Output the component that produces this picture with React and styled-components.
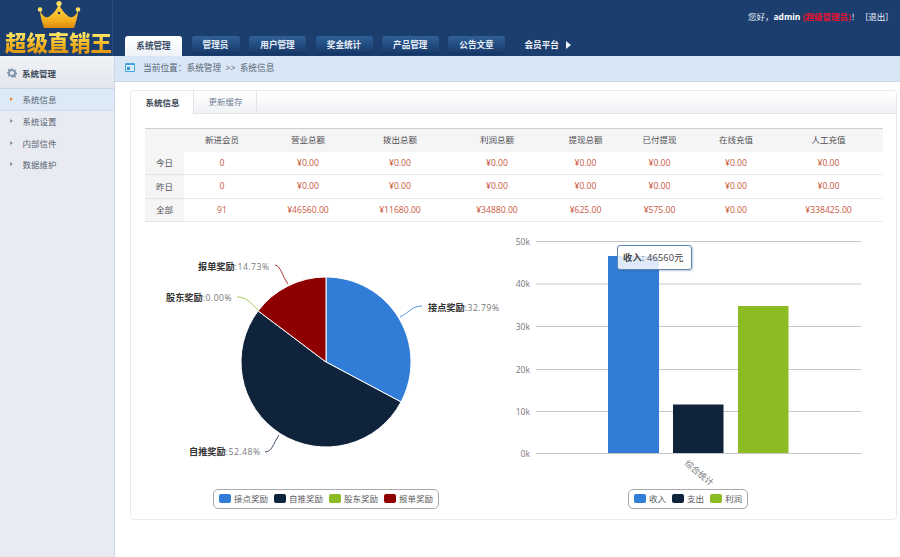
import React from "react";
import styled, { createGlobalStyle } from "styled-components";

const FONT = '"Open Sans", "Noto Sans CJK SC", sans-serif';

const Global = createGlobalStyle`
  html, body { margin: 0; padding: 0; background: #fff; }
  body { font-family: ${FONT}; font-size: 8.5px; color: #555; }
  * { box-sizing: border-box; }
`;

const Page = styled.div`
  width: 900px; height: 557px; display: flex; flex-direction: column; overflow: hidden;
`;
const Header = styled.header`
  height: 56px; background: #1c3e6f; display: flex; flex: none;
`;
const Logo = styled.div`
  width: 113px; flex: none; display: flex; flex-direction: column; align-items: center; padding-left: 5px;
  border-right: 1px solid #2a4a78;
`;
const LogoText = styled.div`
  font-family: "Noto Sans CJK SC", sans-serif; font-weight: 900; font-size: 21.4px; line-height: 24px;
  white-space: nowrap; margin-top: 0;
  background: linear-gradient(#ffe766 15%, #f4b41f 60%, #e39a12 90%);
  -webkit-background-clip: text; background-clip: text; color: transparent;
`;
const HeaderMain = styled.div`
  flex: 1; display: flex; flex-direction: column; justify-content: space-between;
`;
const UserBar = styled.div`
  display: flex; justify-content: flex-end; gap: 6px; padding: 11px 12px 0 0; color: #e6ecf5; line-height: 12px;
`;
const UserName = styled.b` color: #fff; font-size: 8.5px; `;
const Role = styled.span` color: #e8112d; font-weight: 700; `;
const Nav = styled.nav`
  display: flex; align-items: flex-end; padding-left: 12px; gap: 9.5px;
`;
const Tab = styled.div`
  width: ${p => p.$w}px; height: ${p => (p.$active ? 20 : 19)}px; margin-bottom: ${p => (p.$active ? 0 : 1)}px;
  padding-bottom: 2px;
  border-radius: 3px 3px 0 0; display: flex; align-items: center; justify-content: center;
  font-weight: 700; font-size: 8.6px;
  color: ${p => (p.$active ? "#3c4e66" : "#e8eef7")};
  background: ${p => (p.$active ? "linear-gradient(#fff, #eef2f8)" : "linear-gradient(#2f6098, #143564)")};
`;
const PlainTab = styled.div`
  height: 20px; margin-left: 10px; padding-bottom: 3px; display: flex; align-items: center; gap: 7px;
  color: #f0f4fa; font-weight: 700; font-size: 8.6px;
`;
const Arrow = styled.span`
  width: 0; height: 0; border-left: 5px solid #f0f4fa; border-top: 4.5px solid transparent; border-bottom: 4.5px solid transparent;
`;
const Body = styled.div` flex: 1; display: flex; min-height: 0; `;
const Sidebar = styled.aside`
  width: 115px; flex: none; background: #e8ecf2; border-right: 1px solid #cfd9e6; display: flex; flex-direction: column;
`;
const SideTitle = styled.div`
  height: 33px; display: flex; align-items: center; gap: 5px; padding: 1px 0 0 7px;
  color: #3e4a5a; font-weight: 700; background: linear-gradient(#f0f2f6, #e3e7ed); border-bottom: 1px solid #c9d4e2;
`;
const SideItem = styled.div`
  height: 21.7px; display: flex; align-items: center; padding: 0 0 1px 10px; gap: 9.5px;
  color: #596473;
  background: ${p => (p.$active ? "#dce9f7" : "transparent")};
  border-bottom: ${p => (p.$active ? "1px solid #cfdcea" : "none")};
`;
const SideArrow = styled.span`
  width: 0; height: 0; border-left: 3px solid ${p => (p.$active ? "#e8893a" : "#8a94a2")};
  border-top: 2.5px solid transparent; border-bottom: 2.5px solid transparent;
`;
const Main = styled.main` flex: 1; display: flex; flex-direction: column; min-width: 0; `;
const Crumb = styled.div`
  height: 26px; flex: none; background: #d8e6f6; border-bottom: 1px solid #c9d6e5; padding: 0 0 2px 10px;
  display: flex; align-items: center; gap: 8px; color: #5a6675; font-size: 8.7px; word-spacing: 2px;
`;
const Content = styled.div` flex: 1; padding: 8px 3px 0 15px; `;
const Card = styled.section`
  height: 430px; border: 1px solid #e6ebf2; border-radius: 4px; display: flex; flex-direction: column; background: #fff;
`;
const CardTabs = styled.div`
  height: 23px; flex: none; display: flex; background: linear-gradient(#fff, #f1f2f6); border-bottom: 1px solid #e2e5ea; border-radius: 4px 4px 0 0;
`;
const CardTab = styled.div`
  width: 63px; display: flex; align-items: center; justify-content: center; padding: 0 0 2px 1px;
  color: ${p => (p.$active ? "#3c4654" : "#6f8298")};
  font-weight: ${p => (p.$active ? 700 : 400)};
  background: ${p => (p.$active ? "#fff" : "transparent")};
  height: ${p => (p.$active ? "23px" : "22px")};
  border-right: 1px solid #e2e5ea;
  border-radius: ${p => (p.$active ? "4px 0 0 0" : "0")};
`;
const TableWrap = styled.div` padding: 14px 14px 0; flex: none; `;
const StatTable = styled.table`
  width: 738px; border-collapse: collapse; table-layout: fixed; border-top: 1px solid #cfcfd2;
  text-align: center;
`;
const Th = styled.th`
  height: 23px; padding: 0 0 2px; background: #f5f5f6; font-weight: 400; color: #505054; font-size: 8.5px;
`;
const RowHead = styled.th`
  height: 23.3px; padding: 0 0 1px; background: #f5f5f6; font-weight: 400; color: #505054; font-size: 8.5px;
  border-bottom: 1px solid #e4e4e7;
`;
const Td = styled.td`
  padding: 0; color: #c9573e; font-size: 8.6px; border-bottom: 1px solid #ececee;
`;
const Charts = styled.div` flex: 1; display: grid; grid-template-columns: 370px 396px; min-height: 0; margin-top: 2px; `;
const ChartBox = styled.div` position: relative; display: flex; flex-direction: column; `;
const ChartSvg = styled.svg` display: block; flex: none; `;
const LegendRow = styled.div`
  display: flex; justify-content: center; padding-left: ${p => p.$left}px; padding-right: ${p => p.$right}px; margin-top: 1px;
`;
const Legend = styled.div`
  height: 20px; border: 1px solid #a9a9ad; border-radius: 5px; padding: 0 5px 1px; display: flex; align-items: center; gap: 6px; color: #5a5a5e;
`;
const LegendItem = styled.span` display: flex; align-items: center; gap: 3px; `;
const Swatch = styled.i` width: 12px; height: 9px; border-radius: 2px; background: ${p => p.$c}; `;
const Tip = styled.div`
  position: absolute; left: 116px; top: 21px; width: 75px; height: 25px; border: 1px solid #5c86b6; border-radius: 3px;
  background: rgba(255,255,255,.84); box-shadow: 1px 1px 2px rgba(40,70,110,.3); display: flex; align-items: center; padding: 0 0 1px 5px; color: #444; font-size: 9.2px; letter-spacing: .2px; white-space: nowrap;
`;

const colors = { blue: "#317cd6", navy: "#0f233b", green: "#8dbb23", red: "#8f0000" };
const heads = ["", "新进会员", "营业总额", "拨出总额", "利润总额", "提现总额", "已付提现", "在线充值", "人工充值"];
const widths = [39, 76, 96, 88, 106, 71, 77, 76, 109];
const rows = [
  ["今日", "0", "¥0.00", "¥0.00", "¥0.00", "¥0.00", "¥0.00", "¥0.00", "¥0.00"],
  ["昨日", "0", "¥0.00", "¥0.00", "¥0.00", "¥0.00", "¥0.00", "¥0.00", "¥0.00"],
  ["全部", "91", "¥46560.00", "¥11680.00", "¥34880.00", "¥625.00", "¥575.00", "¥0.00", "¥338425.00"],
];

function polar(pct) {
  const a = (pct / 100) * 2 * Math.PI;
  return [326 + 85 * Math.sin(a), 362 - 85 * Math.cos(a)];
}
function slice(from, to) {
  const [x1, y1] = polar(from);
  const [x2, y2] = polar(to);
  return `M326 362L${x1} ${y1}A85 85 0 ${to - from > 50 ? 1 : 0} 1 ${x2} ${y2}Z`;
}

const pieLabels = [
  { x: 428, y: 311, n: "接点奖励", v: ":32.79%" },
  { x: 198, y: 270, n: "报单奖励", v: ":14.73%" },
  { x: 166, y: 301, n: "股东奖励", v: ":0.00%" },
  { x: 189, y: 455, n: "自推奖励", v: ":52.48%" },
];

function PieChart() {
  return (
    <ChartSvg width="370" height="264" viewBox="131 224 370 264" fontSize="8.6" fontFamily={FONT}>
      <path d={slice(0, 32.79)} fill={colors.blue} stroke="#fff" />
      <path d={slice(32.79, 85.27)} fill={colors.navy} stroke="#fff" />
      <path d={slice(85.27, 100)} fill={colors.red} stroke="#fff" />
      <path d="M400 317C410 312 412 306 422 306" fill="none" stroke={colors.blue} strokeWidth=".8" />
      <path d="M288 284C282 276 281 266 275 265" fill="none" stroke={colors.red} strokeWidth=".8" />
      <path d="M258 310C250 302 246 297 237 297" fill="none" stroke={colors.green} strokeWidth=".8" />
      <path d="M279 435C273 444 272 452 265 452" fill="none" stroke={colors.navy} strokeWidth=".8" />
      {pieLabels.map(l => (
        <text key={l.n} x={l.x} y={l.y} fill="#333">
          <tspan fontWeight="700" fontSize="9.2">{l.n}</tspan>
          <tspan fill="#777" letterSpacing=".5">{l.v}</tspan>
        </text>
      ))}
    </ChartSvg>
  );
}

const ticks = [["50k", 241.5], ["40k", 284], ["30k", 326.5], ["20k", 369.5], ["10k", 411.5], ["0k", 453.5]];

function BarChart() {
  return (
    <ChartSvg width="396" height="264" viewBox="501 224 396 264" fontSize="8.6" fontFamily={FONT}>
      {ticks.map(([t, y]) => (
        <g key={t}>
          <line x1="536" x2="861" y1={y} y2={y} stroke="#c6c6ca" />
          <text x="530" y={y + 3} textAnchor="end" fill="#77777b">{t}</text>
        </g>
      ))}
      <rect x="608" y="256" width="51" height="197" fill={colors.blue} />
      <rect x="673" y="404.5" width="50.5" height="48.5" fill={colors.navy} />
      <rect x="738" y="306" width="50.5" height="147" fill={colors.green} />
      <text x="699" y="476" textAnchor="middle" fill="#77777b" transform="rotate(40 699 473)">综合统计</text>
    </ChartSvg>
  );
}

function Crown() {
  return (
    <svg width="46" height="30" viewBox="0 0 46 30">
      <defs>
        <linearGradient id="cg" x1="0" y1="0" x2="0" y2="1">
          <stop offset="0" stopColor="#ffd94a" />
          <stop offset=".7" stopColor="#f3ad1c" />
          <stop offset="1" stopColor="#d98a10" />
        </linearGradient>
      </defs>
      <path d="M4 10C6 16 10 19 14 16C18 13 21 9 23 4C25 9 28 13 32 16C36 19 40 16 42 10C42 16 40 22 38 28H8C6 22 4 16 4 10Z" fill="url(#cg)" />
      <circle cx="23" cy="3.6" r="2.6" fill="#ffdf5e" />
      <circle cx="4" cy="9.5" r="2.3" fill="#ffdf5e" />
      <circle cx="42" cy="9.5" r="2.3" fill="#ffdf5e" />
      <circle cx="13" cy="14" r="1.3" fill="#1c3e6f" />
      <circle cx="23" cy="13" r="1.3" fill="#1c3e6f" />
      <circle cx="33" cy="14" r="1.3" fill="#1c3e6f" />
    </svg>
  );
}

function Gear() {
  return (
    <svg width="10" height="10" viewBox="0 0 24 24">
      <path fill="#7f96ad" fillRule="evenodd" d="M10 1h4l.7 3.2 1.9.8 2.8-1.8 2.8 2.8-1.8 2.8.8 1.9 3.2.7v4l-3.2.7-.8 1.9 1.8 2.8-2.8 2.8-2.8-1.8-1.9.8L14 23h-4l-.7-3.2-1.9-.8-2.8 1.8-2.8-2.8 1.8-2.8-.8-1.9L-.4 14v-4l3.2-.7.8-1.9L1.8 4.6l2.8-2.8 2.8 1.8 1.9-.8zM12 7a5 5 0 100 10 5 5 0 000-10z" />
    </svg>
  );
}

function CrumbIcon() {
  return (
    <svg width="10" height="9" viewBox="0 0 10 9">
      <rect width="10" height="9" rx="1" fill="#4aa3dc" />
      <rect x="1" y="2" width="8" height="6" fill="#d5ecfa" />
      <rect x="2" y="4" width="3" height="3" fill="#3f93cf" />
    </svg>
  );
}

const navs = [["系统管理", 57, true], ["管理员", 48], ["用户管理", 57], ["奖金统计", 57], ["产品管理", 56.5], ["公告文章", 57]];
const sideItems = ["系统信息", "系统设置", "内部信件", "数据维护"];
const pieLegend = [["接点奖励", colors.blue], ["自推奖励", colors.navy], ["股东奖励", colors.green], ["报单奖励", colors.red]];
const barLegend = [["收入", colors.blue], ["支出", colors.navy], ["利润", colors.green]];

export default function App() {
  return (
    <Page>
      <Global />
      <Header>
        <Logo>
          <Crown />
          <LogoText>超级直销王</LogoText>
        </Logo>
        <HeaderMain>
          <UserBar>
            <span>您好，<UserName>admin</UserName> <Role>(超级管理员)</Role>！</span>
            <span>[退出]</span>
          </UserBar>
          <Nav>
            {navs.map(([t, w, a]) => <Tab key={t} $w={w} $active={a}>{t}</Tab>)}
            <PlainTab>会员平台 <Arrow /></PlainTab>
          </Nav>
        </HeaderMain>
      </Header>
      <Body>
        <Sidebar>
          <SideTitle><Gear />系统管理</SideTitle>
          {sideItems.map((t, i) => (
            <SideItem key={t} $active={i === 0}><SideArrow $active={i === 0} />{t}</SideItem>
          ))}
        </Sidebar>
        <Main>
          <Crumb><CrumbIcon />当前位置：系统管理 &gt;&gt; 系统信息</Crumb>
          <Content>
            <Card>
              <CardTabs>
                <CardTab $active>系统信息</CardTab>
                <CardTab>更新缓存</CardTab>
              </CardTabs>
              <TableWrap>
                <StatTable>
                  <colgroup>{widths.map((w, i) => <col key={i} width={w} />)}</colgroup>
                  <thead>
                    <tr>{heads.map((h, i) => <Th key={i}>{h}</Th>)}</tr>
                  </thead>
                  <tbody>
                    {rows.map(r => (
                      <tr key={r[0]}>
                        <RowHead>{r[0]}</RowHead>
                        {r.slice(1).map((c, i) => <Td key={i}>{c}</Td>)}
                      </tr>
                    ))}
                  </tbody>
                </StatTable>
              </TableWrap>
              <Charts>
                <ChartBox>
                  <PieChart />
                  <LegendRow $left={20} $right={0}>
                    <Legend>
                      {pieLegend.map(([t, c]) => <LegendItem key={t}><Swatch $c={c} />{t}</LegendItem>)}
                    </Legend>
                  </LegendRow>
                </ChartBox>
                <ChartBox>
                  <BarChart />
                  <LegendRow $left={0} $right={22}>
                    <Legend>
                      {barLegend.map(([t, c]) => <LegendItem key={t}><Swatch $c={c} />{t}</LegendItem>)}
                    </Legend>
                  </LegendRow>
                  <Tip><b>收入</b>: 46560元</Tip>
                </ChartBox>
              </Charts>
            </Card>
          </Content>
        </Main>
      </Body>
    </Page>
  );
}
